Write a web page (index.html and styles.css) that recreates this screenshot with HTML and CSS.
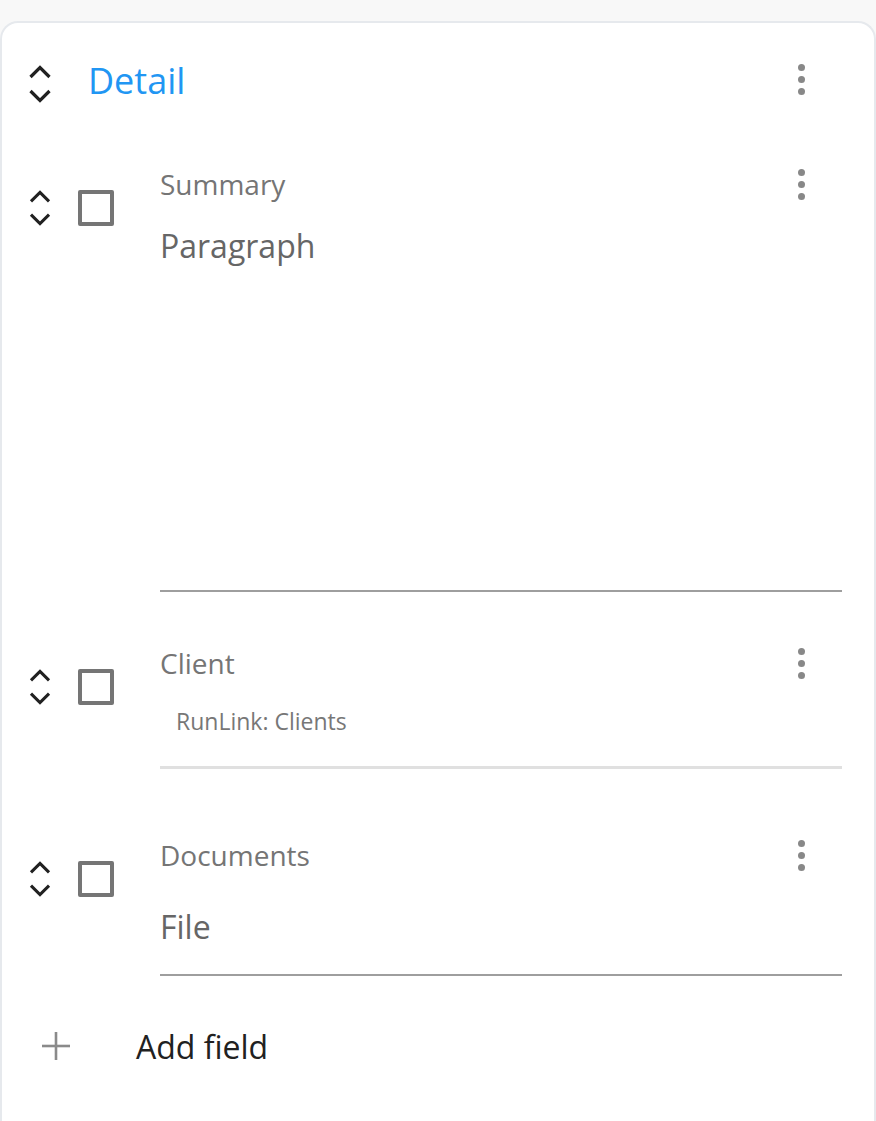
FILE: index.html
```html
<!DOCTYPE html>
<html lang="en">
<head>
    <meta charset="UTF-8">
    <meta name="viewport" content="width=device-width, initial-scale=1.0">
    <title>Detail section</title>
    <link rel="stylesheet" href="styles.css">
</head>
<body>
    <div class="card">
        <div class="section-header">
            <svg class="move" viewBox="0 0 24 40"><polyline points="2.5,13 12,3.5 21.5,13"/><polyline points="2.5,27 12,36.5 21.5,27"/></svg>
            <h2 class="section-title">Detail</h2>
            <div class="kebab"><span></span><span></span><span></span></div>
        </div>

        <div class="field">
            <svg class="move" viewBox="0 0 24 40"><polyline points="2.5,13 12,3.5 21.5,13"/><polyline points="2.5,27 12,36.5 21.5,27"/></svg>
            <div class="check"></div>
            <div class="field-body">
                <div class="field-label-row">
                    <span class="field-label">Summary</span>
                    <div class="kebab"><span></span><span></span><span></span></div>
                </div>
                <div class="field-value paragraph">Paragraph</div>
            </div>
        </div>

        <div class="field field-link">
            <svg class="move" viewBox="0 0 24 40"><polyline points="2.5,13 12,3.5 21.5,13"/><polyline points="2.5,27 12,36.5 21.5,27"/></svg>
            <div class="check"></div>
            <div class="field-body">
                <div class="field-label-row">
                    <span class="field-label">Client</span>
                    <div class="kebab"><span></span><span></span><span></span></div>
                </div>
                <div class="link-value">RunLink: Clients</div>
            </div>
        </div>

        <div class="field">
            <svg class="move" viewBox="0 0 24 40"><polyline points="2.5,13 12,3.5 21.5,13"/><polyline points="2.5,27 12,36.5 21.5,27"/></svg>
            <div class="check"></div>
            <div class="field-body">
                <div class="field-label-row">
                    <span class="field-label">Documents</span>
                    <div class="kebab"><span></span><span></span><span></span></div>
                </div>
                <div class="field-value file">File</div>
            </div>
        </div>

        <div class="add-field">
            <svg class="plus" viewBox="0 0 28 28"><line x1="14" y1="0" x2="14" y2="28"/><line x1="0" y1="14" x2="28" y2="14"/></svg>
            <span>Add field</span>
        </div>
    </div>
</body>
</html>
```

FILE: styles.css
```css
* {
    margin: 0;
    padding: 0;
    box-sizing: border-box;
}

body {
    font-family: 'Open Sans', 'Noto Sans', sans-serif;
    background: #f8f8f8;
    padding-top: 21px;
    min-height: 100vh;
}

.card {
    background: white;
    border: 2px solid #e6e9ed;
    border-bottom: none;
    border-radius: 18px 18px 0 0;
    min-height: 1110px;
    padding: 34px 32px 40px 26px;
}

.move {
    width: 24px;
    height: 40px;
    flex-shrink: 0;
    fill: none;
    stroke: #212121;
    stroke-width: 3.2;
}

.kebab {
    display: flex;
    flex-direction: column;
    gap: 5px;
    width: 8px;
    margin-right: 36px;
}

.kebab span {
    width: 7px;
    height: 7px;
    border-radius: 50%;
    background: #888;
}

.section-header {
    display: flex;
    align-items: center;
    height: 48px;
}

.section-header .move {
    margin-top: 5px;
}

.section-header .kebab {
    margin-left: auto;
    margin-right: 36px;
    margin-top: -3px;
}

.section-title {
    margin-left: 36px;
    font-size: 36px;
    font-weight: 400;
    line-height: 48px;
    color: #2196f3;
}

.field {
    display: flex;
    align-items: flex-start;
    padding-top: 51px;
}

.section-header + .field {
    padding-top: 59px;
}

.field .move {
    margin-top: 25px;
    height: 38px;
}

.check {
    width: 36px;
    height: 36px;
    margin-top: 26px;
    margin-left: 26px;
    border: 4px solid #757575;
    border-radius: 2px;
    flex-shrink: 0;
}

.field-body {
    flex: 1;
    margin-left: 46px;
}

.field-label-row {
    display: flex;
    justify-content: space-between;
    align-items: center;
    height: 40px;
}

.field-label {
    font-size: 28px;
    line-height: 40px;
    color: #757575;
}

.field-value {
    font-size: 32px;
    line-height: 44px;
    color: #666;
    border-bottom: 2px solid #9e9e9e;
}

.paragraph {
    margin-top: 20px;
    height: 368px;
}

.file {
    margin-top: 30px;
    height: 71px;
}

.link-value {
    margin-top: 22px;
    padding: 0 0 29px 16px;
    font-size: 23px;
    line-height: 32px;
    color: #777;
    border-bottom: 3px solid #e0e0e0;
    margin-bottom: 15px;
}

.add-field {
    display: flex;
    align-items: center;
    margin-top: 48px;
    padding-left: 14px;
    height: 44px;
    font-size: 32px;
    color: #212121;
}

.plus {
    width: 28px;
    height: 28px;
    margin-right: 66px;
    stroke: #8a8a8a;
    stroke-width: 2.6;
}
```
